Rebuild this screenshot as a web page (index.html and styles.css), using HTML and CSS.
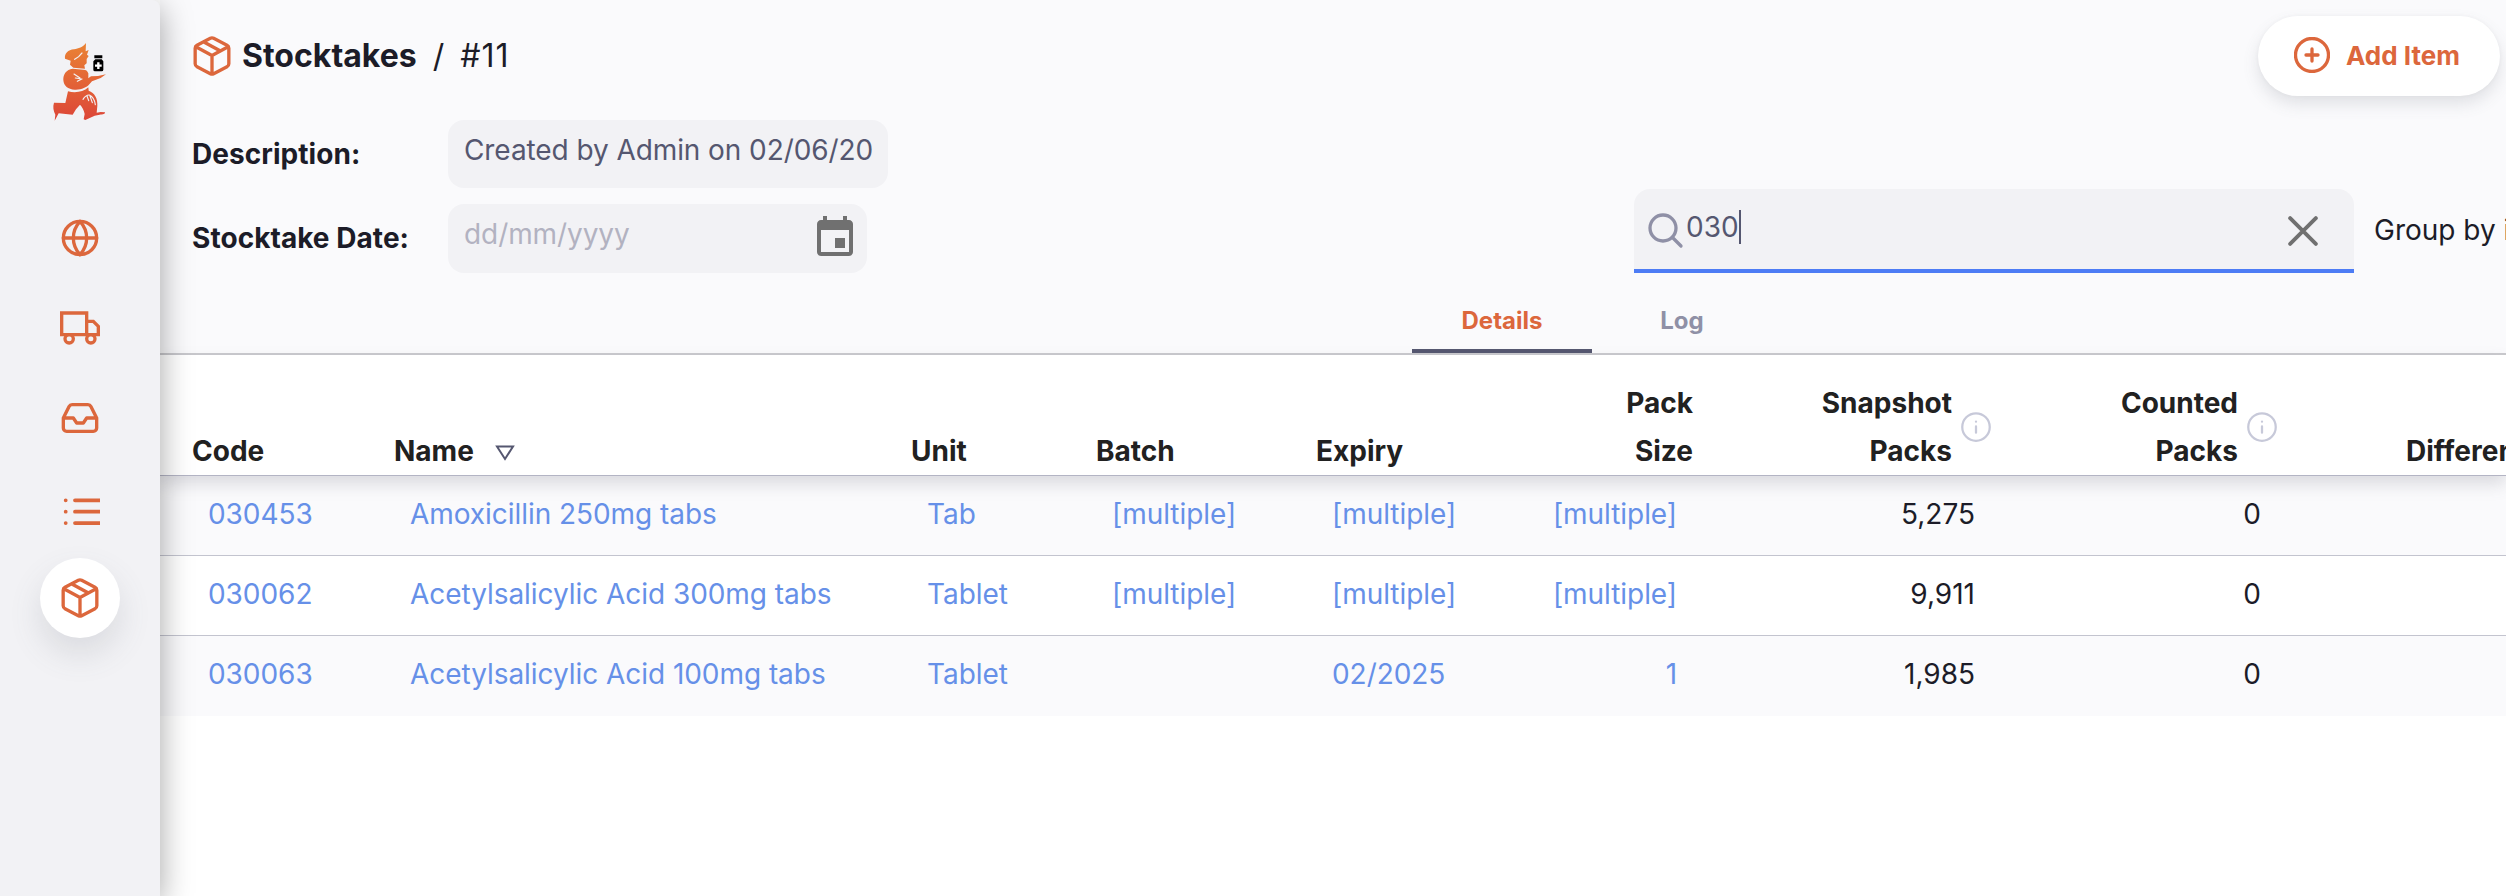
FILE: index.html
```html
<!DOCTYPE html>
<html lang="en">
<head>
<meta charset="utf-8">
<title>Stocktakes / #11</title>
<link rel="stylesheet" href="styles.css">
</head>
<body>
<svg class="defs" width="0" height="0" aria-hidden="true">
  <symbol id="box" viewBox="0 0 24 24">
    <path d="M22.100 16.600V7.400a2 2 0 0 0-1.100-1.800l-8-4.200a2.200 2.200 0 0 0-2 0L3 5.600a2 2 0 0 0-1.100 1.800v9.200A2 2 0 0 0 3 18.400l8 4.200a2.200 2.200 0 0 0 2 0l8-4.200a2 2 0 0 0 1.100-1.800zM2.300 6.500 12 11.700l9.700-5.200M12 22.900V11.700M16.800 8.900 7.400 3.700"/>
  </symbol>
  <symbol id="info" viewBox="0 0 24 24">
    <circle cx="12" cy="12" r="11"/><path d="M12 16.500v-5M12 7.600v.1"/>
  </symbol>
</svg>
<div class="app">
  <nav class="sidebar">
    <svg class="logo" viewBox="0 0 186 276">
      <defs><linearGradient id="flame" gradientUnits="userSpaceOnUse" x1="0" y1="20" x2="0" y2="255"><stop offset="0" stop-color="#ea8334"/><stop offset="1" stop-color="#dc4538"/></linearGradient></defs>
      <g fill="url(#flame)">
        <path d="M114 21C104 34 92 37 78 40C60 42 49 52 51 68L68 74L66 86L76 95L111 98L109 88L116 82L116 69L122 60L117 56L122 42L113 46Z"/>
        <path d="M74 98C55 100 45 115 46 132C47 150 60 160 80 161C100 162 115 155 124 145L132 136L158 126L174 115L150 120L129 121L121 127L121 112C118 104 114 101 106 101Z"/>
        <path d="M60 166C82 172 106 168 121 154L122 164C140 170 150 188 148 210L146 230L158 228L171 229C172 234 165 236 155 236L140 239L112 252L107 250L110 234C108 222 102 212 96 206L84 220L74 236L32 232L20 254L22 236C16 224 14 212 18 200L52 201Z"/>
      </g>
      <path class="logo-cut" d="M80 70L92 62L102 51M78 114L96 126M82 126L102 129M88 136L100 130"/>
      <path class="logo-cut" d="M105 190Q114 176 124 177Q139 184 142 206M117 180L122 194M126 180L133 200"/>
      <path d="M139 58h24v9h-24zM142 70h19l5 6v25q0 5-5 5h-20q-5 0-5-5V76z"/>
      <path class="logo-cross" d="M151 79v20M141 89h20"/>
    </svg>
    <div class="menu">
      <svg class="icon" viewBox="0 0 24 24"><circle cx="12" cy="12" r="10"/><path d="M2 12h20M12 2c2.500 2.740 4 6.290 4 10s-1.500 7.260-4 10c-2.500-2.740-4-6.290-4-10s1.500-7.260 4-10z"/></svg>
      <svg class="icon icon-sharp" viewBox="0 0 24 24"><path d="M1 3h15v13H1zM16 8h4l3 3v5h-7z"/><circle cx="5.500" cy="18.500" r="2.500"/><circle cx="18.500" cy="18.500" r="2.500"/></svg>
      <svg class="icon" viewBox="0 0 24 24"><path d="M22 12h-6l-2 3h-4l-2-3H2M5.450 5.110 2 12v6a2 2 0 0 0 2 2h16a2 2 0 0 0 2-2v-6l-3.450-6.890A2 2 0 0 0 16.760 4H7.240a2 2 0 0 0-1.790 1.110z"/></svg>
      <svg class="icon icon-list" viewBox="0 0 40 40"><path d="M15 12.300h30M15 23.700h30M15 35.100h30M5.700 12.300v.02M5.700 23.700v.02M5.700 35.100v.02"/></svg>
      <span class="active"><svg class="icon"><use href="#box"/></svg></span>
    </div>
  </nav>
  <main class="main">
    <header class="toolbar">
      <div class="titlebar">
        <h1 class="crumbs"><svg class="icon"><use href="#box"/></svg><b>Stocktakes</b><span class="slash">/</span><span class="number">#11</span></h1>
        <button class="add"><svg class="add-icon" viewBox="0 0 36 36"><circle cx="18" cy="18" r="16.500"/><path d="M18 12v12M12 18h12"/></svg>Add Item</button>
      </div>
      <div class="filters">
        <div class="form">
          <div class="field"><label>Description:</label><div class="input input-text"><span>Created by Admin on 02/06/20</span></div></div>
          <div class="field"><label>Stocktake Date:</label><div class="input input-date"><span>dd/mm/yyyy</span><svg class="calendar" viewBox="3 1 18 20"><path d="M17 12h-5v5h5v-5zM16 1v2H8V1H6v2H5c-1.110 0-1.990.9-1.990 2L3 19c0 1.100.89 2 2 2h14c1.100 0 2-.9 2-2V5c0-1.100-.9-2-2-2h-1V1h-2zm3 18H5V8h14v11z"/></svg></div></div>
        </div>
        <div class="search">
          <svg class="magnify" viewBox="0 0 36 36"><circle cx="15" cy="15" r="13"/><path d="M24.500 24.500l8.500 8.500"/></svg>
          <span class="query">030</span><span class="caret"></span>
          <svg class="clear" viewBox="0 0 28 28"><path d="M2 2l24 24M26 2 2 26"/></svg>
        </div>
        <span class="group">Group by item</span>
      </div>
      <div class="tabs"><span class="tab tab-on">Details</span><span class="tab">Log</span></div>
    </header>
    <section class="table">
      <div class="row head">
        <div>Code</div>
        <div>Name<svg class="sort" viewBox="0 0 20 16"><path d="M2 1.500h16L10 14z"/></svg></div>
        <div>Unit</div><div>Batch</div><div>Expiry</div>
        <div class="num pack">Pack<br>Size</div>
        <div class="num snap"><span>Snapshot<br>Packs</span><svg class="info"><use href="#info"/></svg></div>
        <div class="num snap"><span>Counted<br>Packs</span><svg class="info"><use href="#info"/></svg></div>
        <div class="diff">Difference</div>
      </div>
      <div class="row body tint"><div>030453</div><div>Amoxicillin 250mg tabs</div><div>Tab</div><div>[multiple]</div><div>[multiple]</div><div class="num">[multiple]</div><div class="num dark">5,275</div><div class="num dark">0</div></div>
      <div class="row body"><div>030062</div><div>Acetylsalicylic Acid 300mg tabs</div><div>Tablet</div><div>[multiple]</div><div>[multiple]</div><div class="num">[multiple]</div><div class="num dark">9,911</div><div class="num dark">0</div></div>
      <div class="row body tint"><div>030063</div><div>Acetylsalicylic Acid 100mg tabs</div><div>Tablet</div><div></div><div>02/2025</div><div class="num">1</div><div class="num dark">1,985</div><div class="num dark">0</div></div>
    </section>
  </main>
</div>
</body>
</html>
```
FILE: styles.css
```css
* { box-sizing: border-box; }
body { margin: 0; font: 400 28px/48px Inter, "Liberation Sans", sans-serif; color: #1c1c28; background: #fff; overflow: hidden; }
.defs { position: absolute; }
.app { display: flex; width: 2506px; height: 896px; overflow: hidden; }

.sidebar { position: relative; z-index: 2; flex: none; width: 160px; height: 896px; background: #f2f2f5; border-radius: 0 8px 0 0; box-shadow: 0 8px 32px rgba(0,0,0,.36); display: flex; flex-direction: column; align-items: center; padding-top: 36px; }
.logo { width: 62px; height: 92px; margin-left: -2px; }
.logo-cut { fill: none; stroke: #f2f2f5; stroke-width: 3.5; stroke-linecap: round; }
.logo-cross { fill: none; stroke: #fff; stroke-width: 7; }
.menu { display: flex; flex-direction: column; align-items: center; gap: 50px; padding-top: 90px; }
.icon { display: block; flex: none; width: 40px; height: 40px; fill: none; stroke: #dc673c; stroke-width: 2; stroke-linecap: round; stroke-linejoin: round; }
.icon-sharp { stroke-linejoin: miter; }
.icon-list { stroke-width: 3.8; }
.active { display: flex; align-items: center; justify-content: center; width: 80px; height: 80px; margin-top: -20px; border-radius: 50%; background: #fff; box-shadow: 0 16px 32px rgba(96,97,112,.16); }

.main { flex: 1; min-width: 0; }
.toolbar { height: 355px; background: #fafafc; border-bottom: 2px solid #cacace; }
.titlebar { display: flex; justify-content: space-between; height: 112px; padding: 16px 6px 0 32px; }
.crumbs { display: flex; align-items: center; height: 80px; margin: 0; font-size: 32px; font-weight: 400; }
.crumbs b { font-weight: 700; margin-left: 10px; }
.slash { margin: 0 16px; }
.number { letter-spacing: 1px; }
.add { display: flex; align-items: center; width: 242px; height: 80px; padding: 0 0 2px 36px; border: 0; border-radius: 40px; background: #fff; color: #dc673c; font: 700 26px Inter, sans-serif; white-space: nowrap; box-shadow: 0 8px 16px rgba(96,97,112,.16), 0 0 4px rgba(40,41,61,.04); }
.add-icon { width: 36px; height: 36px; margin-right: 16px; fill: none; stroke: currentColor; stroke-width: 3.3; stroke-linecap: round; }

.filters { display: flex; height: 177px; padding-left: 32px; overflow: hidden; }
.form { flex: none; width: 1442px; padding-top: 8px; display: flex; flex-direction: column; gap: 16px; }
.field { display: flex; }
.field label { width: 256px; padding-top: 10px; font-weight: 700; letter-spacing: .05px; }
.input { display: flex; height: 68px; padding: 6px 16px 0; background: #f2f2f5; border-radius: 16px; color: #555770; white-space: nowrap; letter-spacing: -.08px; }
.input-text { width: 440px; }
.input-date { width: 419px; height: 69px; color: #b2b2c1; justify-content: space-between; padding-right: 14px; }
.calendar { width: 36px; height: 40px; margin-top: 6px; fill: #707070; }
.search { flex: none; display: flex; width: 720px; height: 84px; margin-top: 77px; padding-left: 14px; background: #f2f2f5; border-radius: 16px 16px 0 0; border-bottom: 4px solid #4d7cf5; color: #555770; }
.magnify { width: 36px; height: 36px; margin: 24px 2px 0 0; fill: none; stroke: #8f90a6; stroke-width: 3.3; stroke-linecap: round; }
.query { padding-top: 14px; }
.caret { width: 2px; height: 34px; margin-top: 21px; background: #555770; }
.clear { width: 30px; height: 30px; margin: 27px 36px 0 auto; fill: none; stroke: #707070; stroke-width: 3.6; stroke-linecap: round; }
.group { padding: 94px 0 0 20px; white-space: nowrap; }

.tabs { display: flex; height: 64px; padding-left: 1252px; }
.tab { width: 180px; height: 64px; padding-top: 8px; text-align: center; font-size: 24px; font-weight: 700; color: #8f90a6; }
.tab-on { color: #dc673c; border-bottom: 4px solid #555770; }

.row { display: grid; grid-template-columns: 202px 517px 185px 220px 216px 161px 298px 286px 300px; padding-left: 32px; white-space: nowrap; }
.head { position: relative; z-index: 1; height: 121px; align-items: end; background: #fff; border-bottom: 1px solid #b3b4c4; box-shadow: 0 8px 16px rgba(96,97,112,.2); font-weight: 700; color: #212121; }
.sort { width: 20px; height: 16px; margin-left: 21px; fill: none; stroke: #555770; stroke-width: 2; }
.num { text-align: right; }
.snap { display: flex; justify-content: flex-end; align-items: center; }
.diff { padding-left: 129px; }
.info { width: 30px; height: 30px; margin-left: 9px; fill: none; stroke: #c7c9d9; stroke-width: 1.8; stroke-linecap: round; }
.body { height: 80px; padding-top: 14px; border-bottom: 1px solid #c3c4cf; color: #6690e8; letter-spacing: -.05px; }
.body > div { padding: 0 16px; }
.body > .num { padding-left: 0; }
.body:last-child { border-bottom: 0; }
.body > .dark { color: #1c1c28; letter-spacing: 0; }
.tint { background: #fafafc; }
```
